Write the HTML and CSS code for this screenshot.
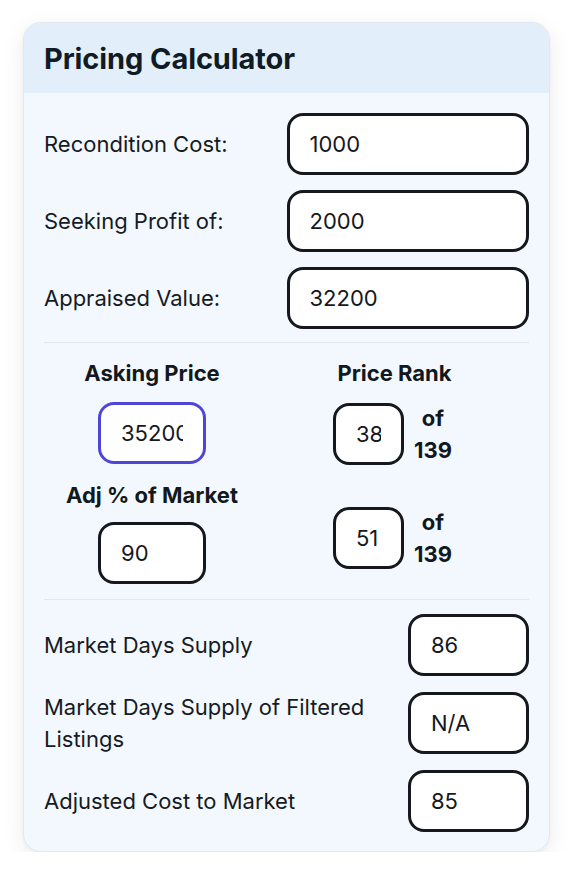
FILE: index.html
```html
<!DOCTYPE html>
<html lang="en">
<head>
<meta charset="utf-8">
<title>Pricing Calculator</title>
<link rel="stylesheet" href="styles.css">
</head>
<body>
<div class="card">
  <div class="card-header">
    <h2 class="title">Pricing Calculator</h2>
  </div>
  <div class="card-body">
    <div class="fields">
      <label class="field-row"><span class="label">Recondition Cost:</span><input class="input" type="text" value="1000"></label>
      <label class="field-row"><span class="label">Seeking Profit of:</span><input class="input" type="text" value="2000"></label>
      <label class="field-row"><span class="label">Appraised Value:</span><input class="input" type="text" value="32200"></label>
    </div>
    <hr class="divider">
    <div class="pricing">
      <div class="col col-left">
        <h3 class="col-heading">Asking Price</h3>
        <input class="input input-sm input-focus asking" type="text" value="35200">
        <h3 class="col-heading adj-heading">Adj % of Market</h3>
        <input class="input input-sm adj" type="text" value="90">
      </div>
      <div class="col col-right">
        <h3 class="col-heading">Price Rank</h3>
        <div class="rank rank-first">
          <input class="input input-rank" type="text" value="38">
          <div class="rank-of">of<br>139</div>
        </div>
        <div class="rank rank-second">
          <input class="input input-rank" type="text" value="51">
          <div class="rank-of">of<br>139</div>
        </div>
      </div>
    </div>
    <hr class="divider divider-lower">
    <div class="metrics">
      <label class="metric-row"><span class="label">Market Days Supply</span><input class="input input-metric" type="text" value="86"></label>
      <label class="metric-row"><span class="label">Market Days Supply of Filtered Listings</span><input class="input input-metric" type="text" value="N/A"></label>
      <label class="metric-row"><span class="label">Adjusted Cost to Market</span><input class="input input-metric" type="text" value="85"></label>
    </div>
  </div>
</div>
</body>
</html>
```
FILE: styles.css
```css
* { box-sizing: border-box; }

body {
  margin: 0;
  padding: 22px 20px 0 23px;
  background: #ffffff;
  font-family: Inter, "Noto Sans", "Liberation Sans", sans-serif;
  color: #111827;
}

.card {
  width: 527px;
  border: 1px solid #e4e8ee;
  border-radius: 18px;
  background: #f3f8fe;
  overflow: hidden;
  box-shadow: 0 6px 22px rgba(20, 30, 50, 0.08), 0 1px 3px rgba(20, 30, 50, 0.05);
}

.card-header {
  height: 70px;
  background: #e2effb;
  display: flex;
  align-items: center;
  padding: 0 20px;
}

.title {
  margin: 0;
  font-size: 29px;
  font-weight: 700;
  line-height: 1;
  letter-spacing: -0.1px;
  color: #101b25;
}

.card-body {
  padding: 20px 20px 19px 20px;
}

.fields {
  display: flex;
  flex-direction: column;
  gap: 15px;
}

.field-row {
  display: grid;
  grid-template-columns: 1fr 1fr;
  align-items: center;
}

.label {
  font-size: 22px;
  line-height: 32px;
  color: #161b22;
}

.input {
  height: 62px;
  width: 100%;
  border: 3px solid #15181c;
  border-radius: 16px;
  background: #ffffff;
  padding: 0 20px;
  font-family: Inter, "Noto Sans", "Liberation Sans", sans-serif;
  font-size: 22px;
  color: #15181c;
  outline: none;
}

.divider {
  border: 0;
  height: 1px;
  background: #e3e7ec;
  margin: 13px 0 14px;
}

.divider-lower {
  margin-top: 15px;
}

.pricing {
  display: grid;
  grid-template-columns: 216px 1fr;
}

.col {
  display: flex;
  flex-direction: column;
  align-items: center;
}

.col-heading {
  margin: 0;
  font-size: 22px;
  font-weight: 700;
  line-height: 32px;
  color: #121820;
}

.input-sm {
  width: 108px;
  margin-top: 13px;
}

.input-focus {
  border-color: #4f46d8;
}

.adj-heading {
  margin-top: 15px;
}

.adj.input-sm {
  margin-top: 11px;
}

.rank {
  display: flex;
  align-items: center;
  gap: 10px;
  padding-right: 4px;
}

.rank-first { margin-top: 13px; }
.rank-second { margin-top: 40px; }

.input-rank {
  width: 71px;
}

.rank-of {
  font-size: 22px;
  font-weight: 700;
  line-height: 32px;
  text-align: center;
  color: #121820;
}

.metrics {
  display: flex;
  flex-direction: column;
  gap: 15px;
}

.metric-row {
  display: flex;
  align-items: center;
  gap: 20px;
}

.metric-row .label {
  flex: 1;
}

.input-metric {
  width: 121px;
  flex: none;
}
```
